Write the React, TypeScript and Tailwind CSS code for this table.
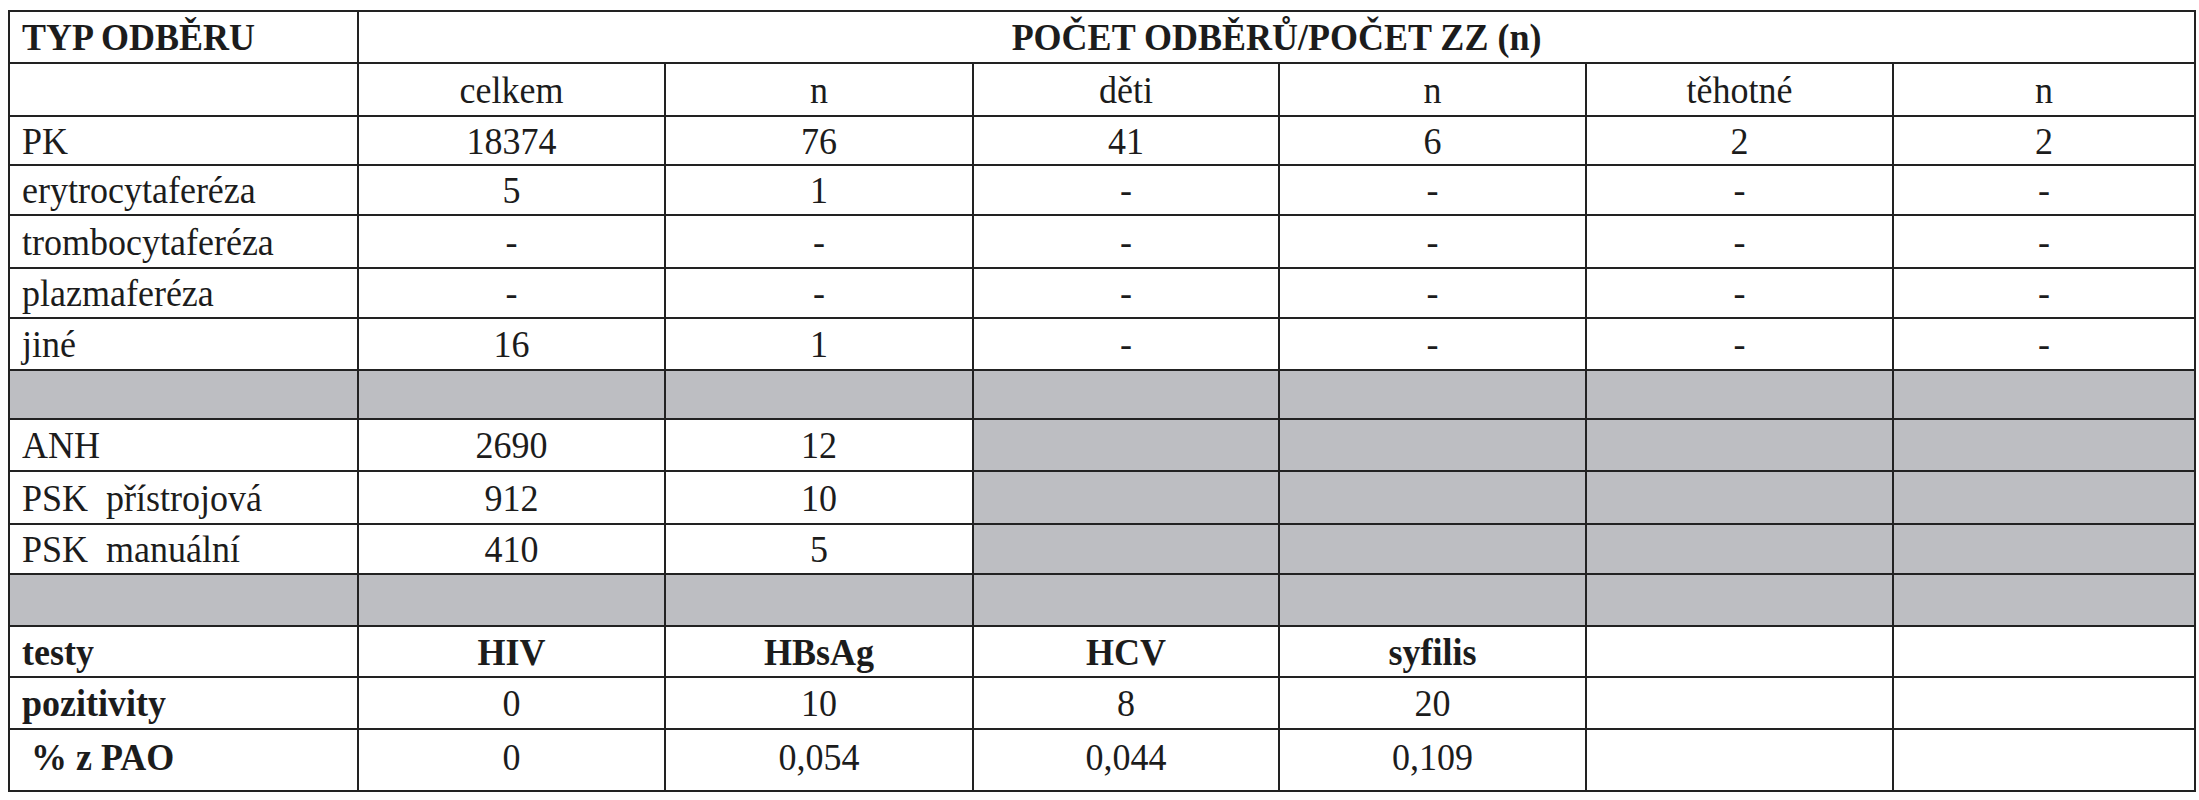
const COLS = ["w-[349px]", "w-[307px]", "w-[308px]", "w-[306px]", "w-[307px]", "w-[307px]", "w-[302px]"];

type Cell = string | null; // null = grey cell

type Row = { h: string; label: Cell; bold?: boolean; cells: Cell[]; boldCells?: boolean; last?: boolean };

const ROWS: Row[] = [
  { h: "h-[53px]", label: "", cells: ["celkem", "n", "děti", "n", "těhotné", "n"] },
  { h: "h-[49px]", label: "PK", cells: ["18374", "76", "41", "6", "2", "2"] },
  { h: "h-[50px]", label: "erytrocytaferéza", cells: ["5", "1", "-", "-", "-", "-"] },
  { h: "h-[53px]", label: "trombocytaferéza", cells: ["-", "-", "-", "-", "-", "-"] },
  { h: "h-[50px]", label: "plazmaferéza", cells: ["-", "-", "-", "-", "-", "-"] },
  { h: "h-[52px]", label: "jiné", cells: ["16", "1", "-", "-", "-", "-"] },
  { h: "h-[49px]", label: null, cells: [null, null, null, null, null, null] },
  { h: "h-[52px]", label: "ANH", cells: ["2690", "12", null, null, null, null] },
  { h: "h-[53px]", label: "PSK  přístrojová", cells: ["912", "10", null, null, null, null] },
  { h: "h-[50px]", label: "PSK  manuální", cells: ["410", "5", null, null, null, null] },
  { h: "h-[52px]", label: null, cells: [null, null, null, null, null, null] },
  { h: "h-[51px]", label: "testy", bold: true, boldCells: true, cells: ["HIV", "HBsAg", "HCV", "syfilis", "", ""] },
  { h: "h-[52px]", label: "pozitivity", bold: true, cells: ["0", "10", "8", "20", "", ""] },
  { h: "h-[62px]", label: " % z PAO", bold: true, cells: ["0", "0,054", "0,044", "0,109", "", ""], last: true },
];

function cellClass(grey: boolean, last?: boolean) {
  return [
    "border-2 border-[#222]",
    grey ? "bg-[#bdbec2]" : "bg-white",
    last ? "align-top pt-[7px]" : "align-middle",
  ].join(" ");
}

// the scan's type is a touch taller than plain Times
function Txt({ children }: { children: React.ReactNode }) {
  return <span className="inline-block scale-y-[1.07]">{children}</span>;
}

export default function App() {
  return (
    <div className="w-[2199px] h-[800px] bg-white pt-[10px] pl-[8px] font-['Liberation_Serif','Times_New_Roman',serif] text-[36px] leading-[40px] text-[#1c1c1c]">
      <table className="table-fixed border-collapse w-[2186px]">
        <colgroup>
          {COLS.map((c, i) => (
            <col key={i} className={c} />
          ))}
        </colgroup>
        <tbody>
          <tr className="h-[52px]">
            <td className="border-2 border-[#222] pl-[12px] font-bold align-middle whitespace-nowrap">
              <Txt>TYP ODBĚRU</Txt>
            </td>
            <td colSpan={6} className="border-2 border-[#222] text-center font-bold align-middle">
              <Txt>POČET ODBĚRŮ/POČET ZZ (n)</Txt>
            </td>
          </tr>
          {ROWS.map((r, ri) => (
            <tr key={ri} className={r.h}>
              <td className={`${cellClass(r.label === null, r.last)} pl-[12px] whitespace-pre ${r.bold ? "font-bold" : ""}`}>
                {r.label ? <Txt>{r.label}</Txt> : null}
              </td>
              {r.cells.map((c, ci) => (
                <td key={ci} className={`${cellClass(c === null, r.last)} text-center ${r.boldCells ? "font-bold" : ""}`}>
                  {c ? <Txt>{c}</Txt> : null}
                </td>
              ))}
            </tr>
          ))}
        </tbody>
      </table>
    </div>
  );
}
